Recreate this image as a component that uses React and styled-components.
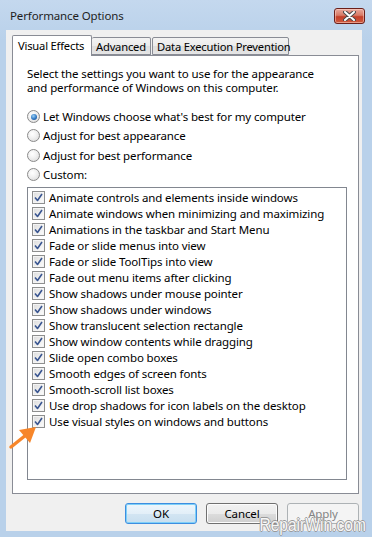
import React from 'react'
import styled, { createGlobalStyle } from 'styled-components'

const GlobalStyle = createGlobalStyle`
  html, body {
    margin: 0;
    padding: 0;
    background: #b9d1ea;
  }
  body {
    font-family: "Noto Sans", "Liberation Sans", sans-serif;
    font-size: 11.5px;
    letter-spacing: -0.12px;
    color: #000;
  }
`;

const Window = styled.div`
  position: relative;
  width: 372px;
  height: 537px;
  overflow: hidden;
  background: linear-gradient(180deg, #c4d8ee 0%, #b9d1ea 40px);
  display: flex;
  flex-direction: column;
`;

const TitleBar = styled.div`
  height: 30px;
  display: flex;
  align-items: flex-start;
  justify-content: space-between;
  padding: 0 7px 0 10px;
  box-sizing: border-box;
`;

const Title = styled.span`
  margin-top: 8px;
  line-height: 16px;
  color: #1e1e1e;
`;

const CloseButton = styled.div`
  margin-top: 8px;
  width: 31px;
  height: 16px;
  box-sizing: border-box;
  border: 1px solid #6b1f1a;
  border-radius: 3px;
  background: linear-gradient(180deg, #e9a99c 0%, #d87a66 45%, #c4402a 55%, #cf5a3e 100%);
  box-shadow: inset 0 0 0 1px rgba(255, 220, 210, 0.5);
  display: flex;
  align-items: center;
  justify-content: center;
`;

const Client = styled.div`
  flex: 1;
  margin: 0 10px 6px 6px;
  background: #f0f0f0;
  padding: 5px 0 0 6px;
  display: flex;
  flex-direction: column;
`;

const TabStrip = styled.div`
  display: flex;
  align-items: flex-end;
  height: 20px;
  position: relative;
  z-index: 1;
`;

const Tab = styled.div`
  box-sizing: border-box;
  width: ${p => p.w}px;
  height: ${p => (p.active ? 21 : 18)}px;
  margin-right: ${p => p.gap || 0}px;
  margin-bottom: ${p => (p.active ? -1 : 0)}px;
  border: 1px solid #898c95;
  border-bottom: ${p => (p.active ? 'none' : '1px solid #898c95')};
  border-left: ${p => (p.noLeft ? 'none' : '1px solid #898c95')};
  border-radius: 2px 2px 0 0;
  background: ${p => (p.active ? '#fff' : 'linear-gradient(180deg, #f3f3f3 0%, #ebebeb 50%, #dedede 51%, #e5e5e5 100%)')};
  padding-top: ${p => (p.active ? 2 : 1)}px;
  padding-left: ${p => (p.active ? 5 : 4)}px;
  font-size: 11.2px;
  letter-spacing: -0.2px;
  line-height: 15px;
  white-space: nowrap;
`;

const Panel = styled.div`
  box-sizing: border-box;
  width: 347px;
  height: 439px;
  border: 1px solid #898c95;
  background: #fff;
  padding: 11px 0 0 14px;
  display: flex;
  flex-direction: column;
`;

const Description = styled.p`
  margin: 0;
  line-height: 14px;
  width: 310px;
`;

const RadioGroup = styled.div`
  margin-top: 12px;
  display: flex;
  flex-direction: column;
`;

const RadioRow = styled.label`
  display: flex;
  align-items: center;
  gap: 3px;
  height: 19.3px;
`;

const RadioDot = styled.span`
  box-sizing: border-box;
  width: 13px;
  height: 13px;
  border-radius: 50%;
  border: 1px solid #8a8a8a;
  background: radial-gradient(circle at 40% 35%, #ffffff 0%, #f2f2f2 40%, #d6d6d6 100%);
  display: flex;
  align-items: center;
  justify-content: center;
  &::after {
    content: '';
    display: ${p => (p.checked ? 'block' : 'none')};
    width: 6px;
    height: 6px;
    border-radius: 50%;
    background: radial-gradient(circle at 40% 35%, #9bd0f5 0%, #2f78c4 55%, #1a3f7a 100%);
  }
`;

const ListBox = styled.div`
  box-sizing: border-box;
  margin-top: 3px;
  width: 320px;
  height: 293px;
  border: 1px solid #828790;
  padding: 1px 0 0 4px;
`;

const CheckRow = styled.div`
  display: flex;
  align-items: center;
  gap: 4px;
  height: 16px;
  white-space: nowrap;
`;

const CheckBox = styled.span`
  box-sizing: border-box;
  width: 13px;
  height: 13px;
  border: 1px solid #8e8f8f;
  background: linear-gradient(135deg, #dcdcdc 0%, #f0f0f0 60%, #fdfdfd 100%);
  box-shadow: inset 0 0 0 1px #f4f4f4;
  display: flex;
  align-items: center;
  justify-content: center;
`;

const ButtonRow = styled.div`
  display: flex;
  justify-content: flex-end;
  gap: 9px;
  margin-top: 9px;
  padding-right: 3px;
`;

const Button = styled.div`
  box-sizing: border-box;
  width: 72px;
  height: 21px;
  border-radius: 3px;
  border: 1px solid ${p => (p.primary ? '#3d8ee0' : p.disabled ? '#adb2b5' : '#707070')};
  background: ${p => (p.disabled
    ? '#f4f4f4'
    : p.primary
      ? 'linear-gradient(180deg, #eef6fc 0%, #e3eff8 50%, #d3e5f3 51%, #c8dfef 100%)'
      : 'linear-gradient(180deg, #f2f2f2 0%, #ebebeb 50%, #dddddd 51%, #cfcfcf 100%)')};
  box-shadow: ${p => (p.primary ? 'inset 0 0 0 1px #7fd0f8' : p.disabled ? 'none' : 'inset 0 0 0 1px #fcfcfc')};
  color: ${p => (p.disabled ? '#838383' : '#000')};
  display: flex;
  align-items: center;
  justify-content: center;
`;

const Watermark = styled.div`
  position: absolute;
  right: 6px;
  bottom: 3px;
  font-family: "Liberation Sans", Arial, sans-serif;
  font-size: 19px;
  line-height: 19px;
  letter-spacing: 0;
  color: #f6f6f6;
  text-shadow: -1px 0 #9a9a9a, 1px 0 #9a9a9a, 0 -1px #9a9a9a, 0 1px #9a9a9a;
  transform: scaleX(0.82);
  transform-origin: right center;
`;

const Pointer = styled.svg`
  position: absolute;
  left: 0;
  top: 420px;
`;

const effects = [
  'Animate controls and elements inside windows',
  'Animate windows when minimizing and maximizing',
  'Animations in the taskbar and Start Menu',
  'Fade or slide menus into view',
  'Fade or slide ToolTips into view',
  'Fade out menu items after clicking',
  'Show shadows under mouse pointer',
  'Show shadows under windows',
  'Show translucent selection rectangle',
  'Show window contents while dragging',
  'Slide open combo boxes',
  'Smooth edges of screen fonts',
  'Smooth-scroll list boxes',
  'Use drop shadows for icon labels on the desktop',
  'Use visual styles on windows and buttons',
]

const options = [
  "Let Windows choose what's best for my computer",
  'Adjust for best appearance',
  'Adjust for best performance',
  'Custom:',
]

const Check = () => (
  <svg width="9" height="9" viewBox="0 0 9 9">
    <path d="M1 4.5 L3.5 7.5 L8 1" fill="none" stroke="#3a5691" strokeWidth="1.6" strokeLinejoin="round" />
  </svg>
)

const App = () => {
  return (
    <Window>
      <GlobalStyle />
      <TitleBar>
        <Title>Performance Options</Title>
        <CloseButton>
          <svg width="13" height="10" viewBox="0 0 13 10">
            <path d="M2 1 L11 9 M11 1 L2 9" stroke="#4a4a4a" strokeWidth="4" strokeLinecap="round" />
            <path d="M2 1 L11 9 M11 1 L2 9" stroke="#ffffff" strokeWidth="2" strokeLinecap="round" />
          </svg>
        </CloseButton>
      </TitleBar>
      <Client>
        <TabStrip>
          <Tab active w={80}>Visual Effects</Tab>
          <Tab w={59} noLeft gap={1}>Advanced</Tab>
          <Tab w={137}>Data Execution Prevention</Tab>
        </TabStrip>
        <Panel>
          <Description>
            Select the settings you want to use for the appearance and performance of Windows on this computer.
          </Description>
          <RadioGroup>
            {options.map((o, i) => (
              <RadioRow key={o}>
                <RadioDot checked={i === 0} />
                {o}
              </RadioRow>
            ))}
          </RadioGroup>
          <ListBox>
            {effects.map(e => (
              <CheckRow key={e}>
                <CheckBox><Check /></CheckBox>
                {e}
              </CheckRow>
            ))}
          </ListBox>
        </Panel>
        <ButtonRow>
          <Button primary>OK</Button>
          <Button>Cancel</Button>
          <Button disabled>Apply</Button>
        </ButtonRow>
      </Client>
      <Pointer width="40" height="30" viewBox="0 0 40 30">
        <path d="M11 27 L26 15" stroke="#f7862a" strokeWidth="3.5" strokeLinecap="round" />
        <polygon points="36,7 30,23 19,10" fill="#f7862a" />
      </Pointer>
      <Watermark>RepairWin.com</Watermark>
    </Window>
  )
}

export default App
